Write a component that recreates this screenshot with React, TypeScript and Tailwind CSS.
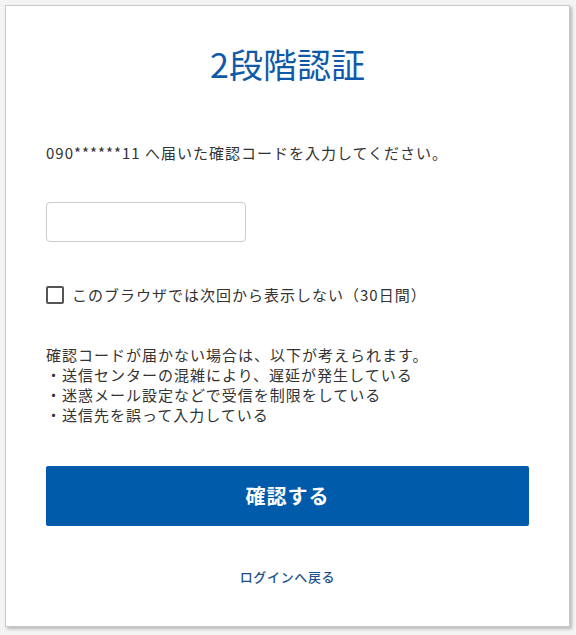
export default function App() {
  return (
    <div
      className="min-h-[635px] bg-[#f4f4f4] pt-[5px] pl-[5px]"
      style={{ fontFamily: '"Noto Sans CJK JP", "Noto Sans", sans-serif' }}
    >
      <div className="w-[565px] h-[622px] bg-white border border-[#c9c9c9] shadow-[2px_2px_3px_rgba(0,0,0,0.25)] px-10 pt-[34px]">
        <h1 className="text-center text-[34px] leading-[48px] text-[#0f5aa8]">2段階認証</h1>

        <p className="mt-[55px] text-[15px] leading-5 tracking-[1px] text-[#333]">
          090******11 へ届いた確認コードを入力してください。
        </p>

        <input
          type="text"
          className="mt-[39px] block w-[200px] h-10 rounded border border-[#cccccc] px-3 text-[15px] outline-none"
        />

        <label className="mt-[43px] flex items-center gap-2 text-[15px] leading-5 tracking-[1px] text-[#333]">
          <span className="w-[18px] h-[18px] border-2 border-[#555] rounded-[2px] bg-white" />
          このブラウザでは次回から表示しない（30日間）
        </label>

        <div className="mt-[40px] text-[15px] leading-5 tracking-[1px] text-[#333]">
          <p>確認コードが届かない場合は、以下が考えられます。</p>
          <p>・送信センターの混雑により、遅延が発生している</p>
          <p>・迷惑メール設定などで受信を制限をしている</p>
          <p>・送信先を誤って入力している</p>
        </div>

        <button className="mt-[41px] w-full h-[60px] rounded-[2px] bg-[#005bab] text-white text-[20px] font-bold tracking-[0.05em]">
          確認する
        </button>

        <div className="mt-[37px] text-center">
          <a href="#" className="text-[13px] leading-5 font-medium tracking-[0.05em] text-[#1a508c]">
            ログインへ戻る
          </a>
        </div>
      </div>
    </div>
  )
}
